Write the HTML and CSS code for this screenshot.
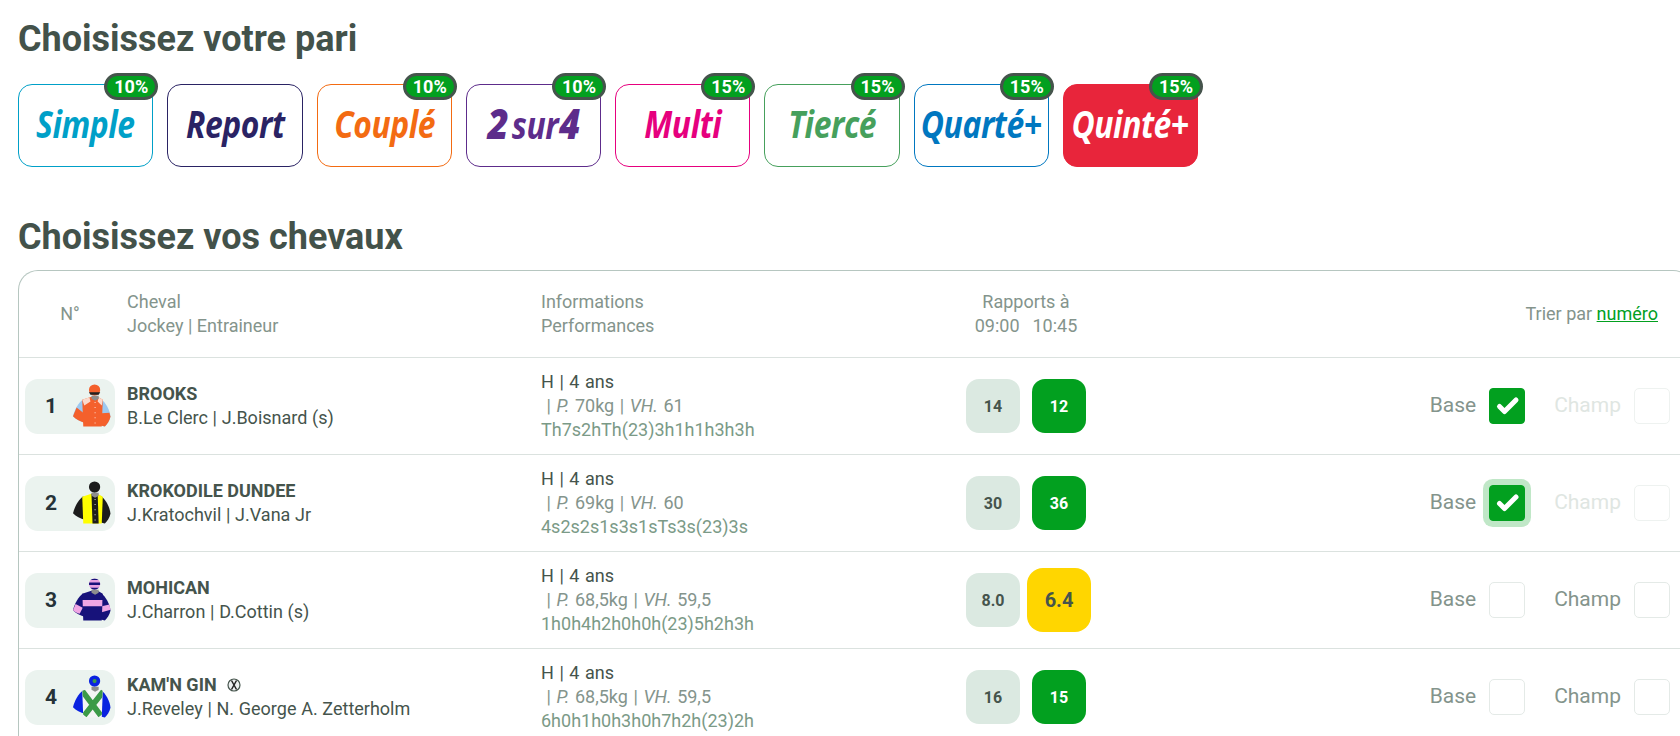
FILE: index.html
```html
<!DOCTYPE html>
<html lang="fr">
<head>
<meta charset="utf-8">
<title>Choisissez votre pari</title>
<link rel="stylesheet" href="styles.css">
</head>
<body>
<svg class="defs" width="0" height="0" aria-hidden="true">
  <defs>
    <clipPath id="body-clip"><path d="M9 15 18 12h6l5 3-1 26H10z"/></clipPath>
    <clipPath id="cap-clip"><circle cx="21" cy="5.500" r="5.500"/></clipPath>
  </defs>
</svg>
<main class="page">
  <h1 class="title">Choisissez votre pari</h1>
  <div class="bets">
    <a class="bet bet-simple"><span class="bet-name">Simple</span><span class="promo">10%</span></a>
    <a class="bet bet-report"><span class="bet-name">Report</span></a>
    <a class="bet bet-couple"><span class="bet-name">Couplé</span><span class="promo">10%</span></a>
    <a class="bet bet-2sur4"><span class="bet-name"><span class="digit">2</span><span class="sur">sur</span><span class="digit">4</span></span><span class="promo">10%</span></a>
    <a class="bet bet-multi"><span class="bet-name">Multi</span><span class="promo">15%</span></a>
    <a class="bet bet-tierce"><span class="bet-name">Tiercé</span><span class="promo">15%</span></a>
    <a class="bet bet-quarte"><span class="bet-name">Quarté+</span><span class="promo">15%</span></a>
    <a class="bet bet-quinte"><span class="bet-name">Quinté+</span><span class="promo">15%</span></a>
  </div>
  <h2 class="title title-second">Choisissez vos chevaux</h2>
  <section class="table">
    <div class="row head">
      <div class="h-num">N°</div>
      <div>Cheval<br>Jockey | Entraineur</div>
      <div>Informations<br>Performances</div>
      <div class="h-odds">Rapports à<br><span class="h-times"><span>09:00</span><span>10:45</span></span></div>
      <div class="h-sort">Trier par <a class="sort-link">numéro</a></div>
    </div>

    <div class="row">
      <div class="num"><span class="num-n">1</span>
        <svg class="jersey" viewBox="0 0 37 42">
          <circle cx="21" cy="5.500" r="5.500" fill="#f4602c"/><path d="M15.500 7.500h11l-1.500 2.500h-8z" fill="#222"/>
          <path d="M10 14.500C5 18 1.500 25 0 31c3 3.500 7 5 12 6.500l2-8z" fill="#9dc8f0"/>
          <path d="M3.500 22.500 0 31c3 3.500 7 5 12 6.500l1-7.500z" fill="#f4602c"/>
          <path d="M27 14c5 4 9 11 9.500 17.500-1 4-3 7-5.500 9.500l-4-1z" fill="#9dc8f0"/>
          <path d="M35.500 27.500l1 4c-1 4-3 7-5.500 9.500l-4-1 1-12z" fill="#f4602c"/>
          <path d="M9 15 18 12h6l5 3-1 26H10z" fill="#f4602c"/>
          <path d="M9 15l7-2.500 1 4-6 4zM29 15l-4-2.500-1 4 4 4z" fill="#fbd9cc"/>
          <path d="M21.500 17v22" stroke="#fbd9cc" stroke-width="1" stroke-dasharray="1 4" fill="none"/>
          <path d="M18 11h7v3l-3.500 2-3.500-2z" fill="#8d8d8d"/>
        </svg>
      </div>
      <div class="who"><strong>BROOKS</strong><span>B.Le Clerc | J.Boisnard (s)</span></div>
      <div class="info"><span>H | 4 ans</span><span class="muted"> | <i>P.</i> 70kg | <i>VH.</i> 61</span><span class="perf">Th7s2hTh(23)3h1h1h3h3h</span></div>
      <div class="odds"><span class="odd">14</span><span class="odd odd-up">12</span></div>
      <div class="picks">
        <label class="pick"><span class="pick-text">Base</span><span class="box box-on"><svg viewBox="0 0 36 36"><path d="M10.500 18.500l5 5L27 12" class="tick"/></svg></span></label>
        <label class="pick pick-off"><span class="pick-text">Champ</span><span class="box"></span></label>
      </div>
    </div>

    <div class="row">
      <div class="num"><span class="num-n">2</span>
        <svg class="jersey" viewBox="0 0 37 42">
          <circle cx="21" cy="5.500" r="5.500" fill="#1c1c1c"/>
          <path d="M10 14.500C5 18 1.500 25 0 31c3 3.500 7 5 12 6.500l2-8z" fill="#1c1c1c"/>
          <path d="M27 14c5 4 9 11 9.500 17.500-1 4-3 7-5.500 9.500l-4-1z" fill="#1c1c1c"/>
          <path d="M9 15 18 12h6l5 3-1 26H10z" fill="#ffff00"/>
          <path d="M18 12h6l1 29h-6z" fill="#1c1c1c"/>
          <path d="M21.500 17v22" stroke="#cfcfcf" stroke-width="1" stroke-dasharray="1 4" fill="none"/>
          <path d="M18 11h7v3l-3.500 2-3.500-2z" fill="#8d8d8d"/>
        </svg>
      </div>
      <div class="who"><strong>KROKODILE DUNDEE</strong><span>J.Kratochvil | J.Vana Jr</span></div>
      <div class="info"><span>H | 4 ans</span><span class="muted"> | <i>P.</i> 69kg | <i>VH.</i> 60</span><span class="perf">4s2s2s1s3s1sTs3s(23)3s</span></div>
      <div class="odds"><span class="odd">30</span><span class="odd odd-up">36</span></div>
      <div class="picks">
        <label class="pick"><span class="pick-text">Base</span><span class="box box-on box-focus"><svg viewBox="0 0 36 36"><path d="M10.500 18.500l5 5L27 12" class="tick"/></svg></span></label>
        <label class="pick pick-off"><span class="pick-text">Champ</span><span class="box"></span></label>
      </div>
    </div>

    <div class="row">
      <div class="num"><span class="num-n">3</span>
        <svg class="jersey" viewBox="0 0 37 42">
          <circle cx="21" cy="5.500" r="5.500" fill="#e6a0e0"/>
          <g clip-path="url(#cap-clip)"><path d="M15 0h12v1.500H15zM15 4h12v2.500H15zM15 9h12v3H15z" fill="#17127a"/></g>
          <path d="M10 14.500C5 18 1.500 25 0 31c3 3.500 7 5 12 6.500l2-8z" fill="#17127a"/>
          <path d="M2.500 25 0 31c2 2 4 3 6.500 3.500l3-6z" fill="#f0a6e4"/>
          <path d="M27 14c5 4 9 11 9.500 17.500-1 4-3 7-5.500 9.500l-4-1z" fill="#17127a"/>
          <path d="M28 27l7.500-1.500 1 5-8.500 2.500z" fill="#f0a6e4"/>
          <path d="M9 15 18 12h6l5 3-1 26H10z" fill="#17127a"/>
          <path d="M8 21h23l-1 6H8z" fill="#f0a6e4" clip-path="url(#body-clip)"/>
          <path d="M18 11h7v3l-3.500 2-3.500-2z" fill="#8d8d8d"/>
        </svg>
      </div>
      <div class="who"><strong>MOHICAN</strong><span>J.Charron | D.Cottin (s)</span></div>
      <div class="info"><span>H | 4 ans</span><span class="muted"> | <i>P.</i> 68,5kg | <i>VH.</i> 59,5</span><span class="perf">1h0h4h2h0h0h(23)5h2h3h</span></div>
      <div class="odds"><span class="odd">8.0</span><span class="odd odd-hot">6.4</span></div>
      <div class="picks">
        <label class="pick"><span class="pick-text">Base</span><span class="box"></span></label>
        <label class="pick"><span class="pick-text">Champ</span><span class="box"></span></label>
      </div>
    </div>

    <div class="row">
      <div class="num"><span class="num-n">4</span>
        <svg class="jersey" viewBox="0 0 37 42">
          <circle cx="21" cy="5.500" r="5.500" fill="#0a22e0"/><circle cx="21" cy="5.500" r="2" fill="#3c9a48"/>
          <path d="M10 14.500C5 18 1.500 25 0 31c3 3.500 7 5 12 6.500l2-8z" fill="#0a22e0"/>
          <path d="M27 14c5 4 9 11 9.500 17.500-1 4-3 7-5.500 9.500l-4-1z" fill="#0a22e0"/>
          <path d="M9 15 18 12h6l5 3-1 26H10z" fill="#f4f4f4"/>
          <path d="M9 15 27 39M30 15 11 39" stroke="#3c9a48" stroke-width="5.500" clip-path="url(#body-clip)" fill="none"/>
          <path d="M18 11h7v3l-3.500 2-3.500-2z" fill="#8d8d8d"/>
        </svg>
      </div>
      <div class="who"><strong>KAM'N GIN<svg class="blinkers" viewBox="0 0 14 14"><circle cx="7" cy="7" r="6" class="blink-ring"/><path d="M4.500 2.500 9.500 11.500M9.500 2.500 4.500 11.500" class="blink-x"/></svg></strong><span>J.Reveley | N. George A. Zetterholm</span></div>
      <div class="info"><span>H | 4 ans</span><span class="muted"> | <i>P.</i> 68,5kg | <i>VH.</i> 59,5</span><span class="perf">6h0h1h0h3h0h7h2h(23)2h</span></div>
      <div class="odds"><span class="odd">16</span><span class="odd odd-up">15</span></div>
      <div class="picks">
        <label class="pick"><span class="pick-text">Base</span><span class="box"></span></label>
        <label class="pick"><span class="pick-text">Champ</span><span class="box"></span></label>
      </div>
    </div>
  </section>
</main>
</body>
</html>
```

FILE: styles.css
```css
* { box-sizing: border-box; }
html, body { margin: 0; height: 736px; overflow: hidden; background: #fff; }
body { font-family: Roboto, "Liberation Sans", sans-serif; color: #45544c; }
.defs { display: block; height: 0; }
.page { padding: 0 0 0 18px; width: 1693px; }

.title { margin: 0; font-size: 36px; line-height: 40px; font-weight: 700; color: #43524a; }
.page > .title:first-child { padding-top: 19px; }
.title-second { margin-top: 50px; }

.bets { display: flex; gap: 14px; margin-top: 25px; }
.bet { position: relative; width: 135.250px; height: 83px; border: 1px solid currentColor; border-radius: 14px;
  display: flex; align-items: center; justify-content: center; padding-bottom: 4px; }
.bet-name { display: inline-block; transform: scaleX(.86); font-family: "Open Sans", sans-serif; font-size: 37px; line-height: 40px;
  font-weight: 700; font-style: italic; white-space: nowrap; letter-spacing: -.5px; }
.digit { font-size: 1.150em; font-weight: 800; line-height: 1; }
.sur { margin: 0 1px 0 4px; }
.bet-simple { color: #00a0c8; }
.bet-report { color: #2a2364; }
.bet-couple { color: #f36b12; }
.bet-2sur4 { color: #5d2c8b; }
.bet-multi { color: #e6007e; }
.bet-tierce { color: #46a05c; }
.bet-quarte { color: #0077c0; }
.bet-quinte { color: #fff; background: #e8253b; border-color: #e8253b; }
.promo { position: absolute; top: -12px; right: -6px; width: 54px; height: 27px; border: 3px solid #45544c;
  border-radius: 14px; background: #02a01f; color: #fff; font: 700 18px/21px Roboto, sans-serif; text-align: center; }

.table { margin-top: 13px; border: 1px solid #b6c6c0; border-bottom: 0; border-radius: 20px 20px 0 0; }
.row { display: grid; grid-template-columns: 108px 414px 425px 120px 1fr; align-items: center; height: 97px; border-top: 1px solid #dbe2df; }
.head { height: 86px; border-top: 0; font-size: 18px; line-height: 24px; color: #84948c; }
.h-num { text-align: center; padding-right: 6px; }
.h-odds { text-align: center; }
.h-times { display: flex; justify-content: center; gap: 13px; }
.h-sort { text-align: right; padding-right: 34px; }
.sort-link { color: #02a01f; text-decoration: underline; }

.num { margin-left: 6px; width: 90px; height: 55px; border-radius: 13px; background: #ebf3ef; display: flex; align-items: center; justify-content: space-between; padding: 0 4px 0 20px; }
.num-n { font-size: 21px; font-weight: 700; color: #263238; }
.jersey { width: 38px; height: 44px; display: block; }

.who, .info { display: flex; flex-direction: column; font-size: 18px; line-height: 24px; white-space: pre-wrap; }
.info { word-spacing: 1.100px; }
.who { word-spacing: .25px; }
.who strong { font-size: 18px; color: #45544c; word-spacing: 0; }
.blinkers { width: 14px; height: 14px; margin-left: 10px; vertical-align: -1px; }
.blink-ring { fill: #eceff0; stroke: #45544c; stroke-width: 1.200; }
.blink-x { stroke: #222; stroke-width: 1.500; fill: none; }
.muted { color: #84948c; }
.perf { color: #7b9a87; }

.odds { display: flex; align-items: center; gap: 12px; }
.odd { flex: none; width: 54px; height: 54px; border-radius: 13px; background: #dbe9e1; display: flex; align-items: center; justify-content: center; font-size: 16px; font-weight: 700; color: #45544c; }
.odd-up { background: #02a01f; color: #fff; }
.odd-hot { width: 64px; height: 64px; margin-left: -5px; border-radius: 16px; background: #ffd600; font-size: 20px; }

.picks { display: flex; justify-content: flex-end; gap: 29px; padding-right: 22px; }
.pick { display: flex; align-items: center; gap: 13px; font-size: 21px; color: #84948c; white-space: nowrap; }
.pick-text { margin-top: -2px; }
.pick-off { color: #dfe6e2; }
.box { display: block; width: 36px; height: 36px; border: 1px solid #e4eae7; border-radius: 5px; background: #fff; }
.pick-off .box { border-color: #eef2f0; }
.box-on { background: #02a01f; border-color: #02a01f; border-radius: 4px; }
.box-on svg { display: block; width: 36px; height: 36px; margin: -1px; }
.box-focus { box-shadow: 0 0 0 6px rgba(2, 160, 31, .25); }
.tick { fill: none; stroke: #fff; stroke-width: 5; stroke-linecap: round; stroke-linejoin: round; }
```
